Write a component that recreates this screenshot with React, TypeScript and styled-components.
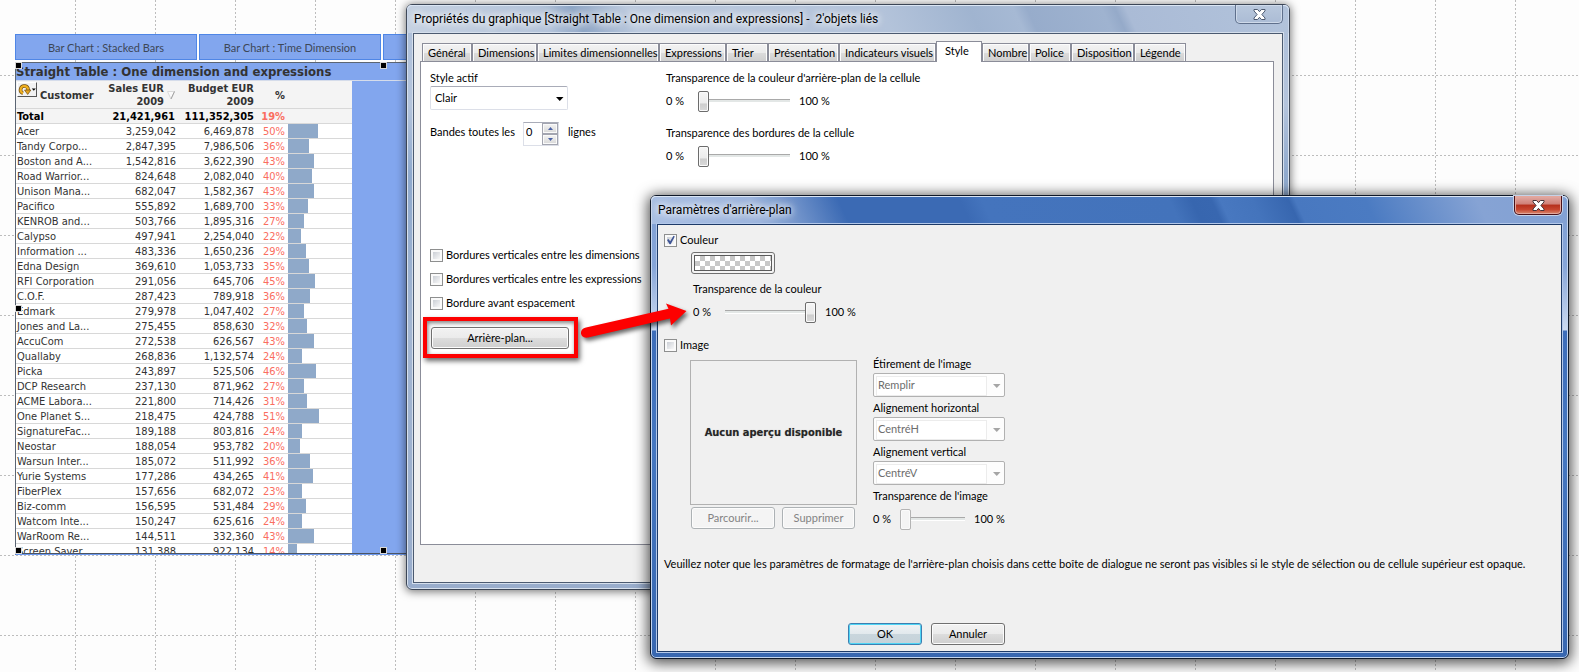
import React, { useState } from 'react';
import styled, { createGlobalStyle, css } from 'styled-components';

const tableFont = '"DejaVu Sans Condensed", "DejaVu Sans", Tahoma, sans-serif';
const dialogFont = 'Lato, Tahoma, sans-serif';
const titleFont = 'Roboto, "Segoe UI", sans-serif';

const Global = createGlobalStyle`
  *, *::before, *::after { box-sizing: border-box; }
  body { margin: 0; background: #fdfdfd; }
  button, input, select { font: inherit; color: inherit; margin: 0; }
`;

/* ---------- Sheet ---------- */

const Desktop = styled.main`
  position: relative;
  min-height: 100vh;
  overflow: hidden;
  padding: 34px 0 0 15px;
  background-color: #fdfdfd;
  background-image:
    conic-gradient(from 90deg at 1px 2px, transparent 50%, #bdbdbd 0 75%, transparent 0),
    conic-gradient(from 90deg at 2px 1px, transparent 50%, #bdbdbd 0 75%, transparent 0);
  background-size: 80px 4px, 4px 80px;
  background-position: 75px 0, 0 75px;
`;

const SheetTabs = styled.nav`
  display: flex;
  gap: 2px;
  width: 737px;
  padding-bottom: 2px;
`;

const SheetTab = styled.button`
  flex: 0 0 182px;
  height: 26px;
  padding: 0;
  border: 1px solid #4f86e6;
  background: #82a6ee;
  color: #3d4757;
  font: 11px ${dialogFont};
`;

const ChartObject = styled.section`
  position: relative;
  width: 737px;
  height: 493px;
  border-top: 1px solid #5b6573;
  border-left: 1px solid #5b6573;
  border-bottom: 1px solid #6d9af0;
  background: #82a6ee;
`;

const ChartClip = styled.div`
  height: 491px;
  overflow: hidden;
  border-bottom: 1px solid #4c5563;
`;

const Caption = styled.h2`
  margin: 0;
  height: 18px;
  border-bottom: 1px solid #d5dcea;
  color: #333;
  font: bold 13px/17px ${tableFont};
  white-space: nowrap;
`;

const Handle = styled.i<{ $x: string; $y: string }>`
  position: absolute;
  left: ${(p) => p.$x};
  top: ${(p) => p.$y};
  width: 7px;
  height: 7px;
  background: #000;
  border: 1px solid #d8d8d8;
`;

const StraightTable = styled.table`
  table-layout: fixed;
  width: 336px;
  border-collapse: separate;
  border-spacing: 0;
  background: #fff;
  color: #333;
  font: 11px/13px ${tableFont};
  white-space: nowrap;

  th, td {
    height: 15px;
    padding: 1px 3px 0 0;
    border-bottom: 1px solid #d8d8d8;
    text-align: right;
    overflow: hidden;
  }
  th:first-child, td:first-child { text-align: left; padding: 1px 0 0 1px; }
  td:last-child, th:last-child { padding: 0; }
  thead th { height: 28px; background: #f4f4f4; }
`;

const TotalRow = styled.tr`
  background: #f4f4f4;
  color: #000;
  font-weight: bold;
`;

const DataRow = styled.tr`
  td:nth-child(2) { padding-right: 2px; }
`;

const Percent = styled.td`
  color: #fa6e5f;
`;

const Bar = styled.div`
  height: 14px;
  background: #8fa9c9;
`;

const HeaderCell = styled.div<{ $end?: boolean }>`
  display: flex;
  align-items: center;
  justify-content: ${(p) => (p.$end ? 'flex-end' : 'flex-start')};
  gap: 3px;
  height: 26px;
`;

const CycleButton = styled.button`
  align-self: flex-start;
  width: 20px;
  height: 15px;
  padding: 0;
  border: 1px solid;
  border-color: #fff #555 #555 #fff;
  background: #f2f2f2;
  line-height: 0;
`;

/* ---------- Windows ---------- */

const Window = styled.section<{ $active?: boolean }>`
  position: absolute;
  border: 1px solid ${(p) => (p.$active ? '#0f1828' : '#3c4656')};
  border-radius: 6px;
  padding: 0 6px 6px;
  ${(p) =>
    p.$active
      ? css`
          background: linear-gradient(to bottom, #7f9fd3 0, #86a5d8 70px, #cbdaf1 134px, #3d6db9 135px, #4577c1 250px, #3867b0 100%);
          box-shadow: inset 0 0 0 1px #c3d5ef, 0 2px 14px 2px rgba(0, 0, 0, 0.7);
        `
      : css`
          background: linear-gradient(to bottom, #adbfd9 0, #b4c4dc 100px, #8fa9cd 170px, #a3b6d2 320px, #99adcc 100%);
          box-shadow: inset 0 0 0 1px #d7e1ee, 0 1px 8px 1px rgba(0, 0, 0, 0.5);
        `}
`;

const PropertiesWindow = styled(Window)`
  top: 4px;
  left: 406px;
  right: 289px;
`;

const BackgroundWindow = styled(Window)`
  top: 195px;
  left: 650px;
  right: 10px;
`;

const TitleBar = styled.header<{ $active?: boolean }>`
  display: flex;
  align-items: flex-start;
  justify-content: space-between;
  height: 28px;
  margin: 0 -6px;
  padding: 0 6px 0 7px;
  border-radius: 5px 5px 0 0;
  background: ${(p) =>
    p.$active
      ? 'linear-gradient(65deg, #a9bfe3 0, #9db5dd 100px, #3b6ab4 180px, #3b6ab4 290px, #4474bd 310px, #4373bb 480px, #3766af 500px, #3867b0 518px, #4878c0 526px, #4474bc 555px, #3766af 588px, #4878c0 594px, #4b7bc2 78%, #86a3d4 90%, #82a1d4 100%)'
      : 'linear-gradient(65deg, #c6d2e2 0, #b4c4da 130px, #8ea6c6 160px, #bccade 210px, #b3c3da 440px, #a0b4d0 520px, #a6b9d4 560px, #97accb 572px, #9fb3d0 640px, #95aac9 652px, #aabbd6 662px, #b2c3db 100%)'};
  box-shadow: inset 0 1px 0 #dbe6f4, inset 1px 0 0 #c9d6ea, inset -1px 0 0 #c9d6ea;
`;

const Title = styled.h1`
  margin: 0;
  font: 12px/28px ${titleFont};
  color: #000;
  white-space: pre;
  text-shadow: 0 0 6px #fff, 0 0 10px #fff, 0 0 12px rgba(255, 255, 255, 0.7);
`;

const CloseButton = styled.button<{ $active?: boolean }>`
  width: 48px;
  height: 19px;
  padding: 0;
  border: 1px solid ${(p) => (p.$active ? '#4a1018' : '#5f708c')};
  border-top: 0;
  border-radius: 0 0 5px 5px;
  line-height: 0;
  background: ${(p) =>
    p.$active
      ? 'linear-gradient(to bottom, #e3aca6 0, #cf8077 45%, #b52f1c 50%, #c6452f 75%, #d98b70 100%)'
      : 'linear-gradient(to bottom, #b9c8dd, #abbcd5)'};
  box-shadow: ${(p) => (p.$active ? '0 0 0 1px #c5d2e8, inset 0 0 0 1px #e3a79c' : 'inset 0 0 0 1px #cfdaea')};
`;

const Client = styled.div<{ $active?: boolean }>`
  border: 1px solid ${(p) => (p.$active ? '#1d3a68' : '#4b5a70')};
  box-shadow: 0 0 0 1px ${(p) => (p.$active ? '#b3c8ea' : '#d5dfec')};
  background: #f0f0f0;
  color: #000;
  font: 11px/16px ${dialogFont};
`;

const PropertiesClient = styled(Client)`
  padding: 7px 8px 37px 6px;
`;

const BackgroundClient = styled(Client)`
  padding: 7px 6px 6px;
`;

/* ---------- Tabs ---------- */

const TabStrip = styled.div`
  display: flex;
  align-items: flex-end;
  height: 20px;
  padding-left: 2px;
`;

const Tab = styled.button<{ $w: number }>`
  flex: 0 0 ${(p) => p.$w}px;
  height: 18px;
  padding: 0 0 0 5px;
  border: 1px solid #8b8d99;
  border-bottom: 0;
  background: linear-gradient(to bottom, #f3f3f3 0, #ebebeb 50%, #dcdcdc 51%, #cfcfcf 100%);
  box-shadow: inset 1px 1px 0 #fcfcfc, inset -1px 0 0 #fcfcfc;
  text-align: left;
  line-height: 17px;
  white-space: nowrap;

  &[aria-selected='true'] {
    height: 21px;
    margin-bottom: -1px;
    padding: 0 0 3px 8px;
    background: #fff;
    box-shadow: none;
    z-index: 1;
  }
`;

const Pane = styled.div`
  display: grid;
  grid-template-columns: 236px 1fr;
  min-height: 484px;
  padding: 8px 9px;
  border: 1px solid #8b8d99;
  background: #fff;
`;

/* ---------- Controls ---------- */

const Column = styled.div`
  display: flex;
  flex-direction: column;
  align-items: flex-start;
`;

const SelectBox = styled.span<{ $w: number }>`
  position: relative;
  display: block;
  width: ${(p) => p.$w}px;

  svg {
    position: absolute;
    right: 4px;
    top: 11px;
    pointer-events: none;
  }
`;

const Select = styled.select`
  display: block;
  appearance: none;
  width: 100%;
  height: 24px;
  padding: 0 20px 0 4px;
  border: 1px solid #dcdfe8;
  border-top-color: #a9acb8;
  border-radius: 2px;
  background: #fff;

  &:disabled {
    opacity: 1;
    border-color: #b1b1b1;
    color: #6d6d6d;
    background:
      linear-gradient(#fff, #fff) 3px 3px / 109px 18px no-repeat,
      linear-gradient(#ececec, #ececec) 2px 2px / 111px 20px no-repeat,
      #fdfdfd;
  }
`;

const BandRow = styled.div`
  display: flex;
  align-items: center;
  height: 24px;
  margin-top: 12px;
  white-space: nowrap;

  label { width: 93px; padding-bottom: 4px; }
  span { padding: 0 0 4px 9px; }
`;

const Spinner = styled.div`
  display: grid;
  grid-template-columns: 1fr 16px;
  grid-template-rows: 11px 11px;
  width: 36px;
  height: 24px;
  border: 1px solid #dcdfe8;
  border-top-color: #a9acb8;

  input {
    grid-row: 1 / 3;
    width: 100%;
    padding: 0 0 4px 2px;
    border: 0;
    background: #fff;
    outline: 0;
  }
`;

const SpinButton = styled.button`
  display: flex;
  align-items: center;
  justify-content: center;
  padding: 0;
  border: 1px solid #a3a5b0;
  background: linear-gradient(#f3f3f3, #d8d8d8);
  box-shadow: inset 0 0 0 1px #fafafa;
  line-height: 0;
`;

const SliderGroup = styled.div`
  display: flex;
  flex-direction: column;
  gap: 4px;
  margin-bottom: 13px;
`;

const SliderRow = styled.div<{ $lead?: number }>`
  display: flex;
  align-items: center;
  height: 22px;

  span:first-child { width: ${(p) => p.$lead ?? 32}px; }
  span:last-child { padding-left: 9px; }
`;

const SliderSpace = styled.div`
  padding-top: 4px;
`;

const Range = styled.input<{ $w: number }>`
  appearance: none;
  display: block;
  width: ${(p) => p.$w}px;
  height: 22px;
  background: transparent;

  &::-webkit-slider-runnable-track {
    height: 4px;
    border-top: 1px solid #a9a9a9;
    border-bottom: 1px solid #fff;
    background: #e3e7e6;
  }
  &::-webkit-slider-thumb {
    appearance: none;
    width: 11px;
    height: 21px;
    margin-top: -9px;
    border: 1px solid #6c6c6c;
    border-radius: 2px;
    background: linear-gradient(to bottom, #f6f6f6 0, #ebebeb 60%, #cdcdcd 61%, #d9d9d9 100%);
    box-shadow: inset 0 0 0 1px #fafafa;
  }
  &:disabled::-webkit-slider-thumb {
    border-color: #b4b4b4;
    background: #f4f4f4;
  }
`;

const CheckLabel = styled.label`
  display: flex;
  align-items: center;
  gap: 3px;
  height: 16px;
  white-space: nowrap;
`;

const CheckInput = styled.input`
  appearance: none;
  width: 13px;
  height: 13px;
  padding: 2px;
  border: 1px solid #8e8f8f;
  background: linear-gradient(135deg, #cbcfd5, #f8f8f8) content-box, #fafafa;
`;

const CheckBox = styled.span`
  position: relative;
  display: block;
  width: 13px;
  height: 13px;
  line-height: 0;

  svg { position: absolute; left: 2px; top: 1px; pointer-events: none; }
`;

const CheckList = styled.div`
  display: flex;
  flex-direction: column;
  gap: 8px;
  margin-top: 101px;
`;

const Button = styled.button<{ $w: number; $primary?: boolean }>`
  width: ${(p) => p.$w}px;
  height: 22px;
  padding: 0;
  border: 1px solid ${(p) => (p.$primary ? '#3c7fb1' : '#707070')};
  border-radius: 3px;
  background: ${(p) =>
    p.$primary
      ? 'linear-gradient(to bottom, #f0f3f5 0, #e2e9ed 49%, #c9d6dd 50%, #c5d2d9 100%)'
      : 'linear-gradient(to bottom, #f2f2f2 0, #ebebeb 49%, #dddddd 50%, #cfcfcf 100%)'};
  box-shadow: inset 0 0 0 1px ${(p) => (p.$primary ? '#4fd5f5' : '#fcfcfc')};

  &:disabled {
    border-color: #adb2b5;
    background: #f4f4f4;
    color: #838383;
  }
`;

/* Red frame that calls out the button it surrounds. */
const Highlight = styled.div`
  margin: 6px 0 0 -7px;
  padding: 6px 5px 5px 4px;
  border: 4px solid #fd0000;
  box-shadow: 2px 3px 5px rgba(0, 0, 0, 0.6), inset 1px 2px 4px rgba(0, 0, 0, 0.5);
`;

const Arrow = styled.svg`
  position: absolute;
  left: 576px;
  top: 296px;
  pointer-events: none;
  filter: drop-shadow(2px 3px 2px rgba(0, 0, 0, 0.6));
`;

const ColorArea = styled.div`
  padding: 4px 0 0 27px;
  margin-bottom: 14px;
`;

const ColorSlider = styled.div`
  padding: 7px 0 0 2px;
`;

const Swatch = styled.button`
  display: block;
  width: 84px;
  height: 22px;
  padding: 2px;
  border: 1px solid #707070;
  border-radius: 3px;
  background: #f4f4f4;

  span {
    display: block;
    height: 100%;
    border: 1px solid #5c5c5c;
    background: repeating-conic-gradient(#c8c8c8 0 25%, #fff 0 50%) 0 0 / 10px 10px;
  }
`;

const ImageArea = styled.div`
  display: grid;
  grid-template-columns: 183px 1fr;
  padding: 3px 0 0 26px;
`;

const Preview = styled.div`
  display: flex;
  align-items: center;
  justify-content: center;
  width: 167px;
  height: 145px;
  margin: 4px 0 2px;
  border: 1px solid #b1b1b1;
  color: #262626;
  font: bold 11px ${tableFont};
  text-shadow: 0 0 1px #aaa;
`;

const ButtonRow = styled.div`
  display: flex;
  gap: 7px;
  padding-left: 1px;
`;

const Field = styled.label`
  display: grid;
  gap: 1px;
  margin-bottom: 3px;
`;

const Note = styled.p`
  margin: 26px 0 51px;
`;

const DialogButtons = styled.div`
  display: flex;
  gap: 9px;
  padding-left: 184px;
`;

/* ---------- Data ---------- */

const rows: [string, string, string, number, number][] = [
  ['Acer', '3,259,042', '6,469,878', 50, 30],
  ['Tandy Corpo...', '2,847,395', '7,986,506', 36, 21],
  ['Boston and A...', '1,542,816', '3,622,390', 43, 26],
  ['Road Warrior...', '824,648', '2,082,040', 40, 24],
  ['Unison Mana...', '682,047', '1,582,367', 43, 26],
  ['Pacifico', '555,892', '1,689,700', 33, 20],
  ['KENROB and...', '503,766', '1,895,316', 27, 16],
  ['Calypso', '497,941', '2,254,040', 22, 13],
  ['Information ...', '483,336', '1,650,236', 29, 18],
  ['Edna Design', '369,610', '1,053,733', 35, 21],
  ['RFI Corporation', '291,056', '645,706', 45, 27],
  ['C.O.F.', '287,423', '789,918', 36, 22],
  ['Edmark', '279,978', '1,047,402', 27, 16],
  ['Jones and La...', '275,455', '858,630', 32, 19],
  ['AccuCom', '272,538', '626,567', 43, 26],
  ['Quallaby', '268,836', '1,132,574', 24, 14],
  ['Picka', '243,897', '525,506', 46, 28],
  ['DCP Research', '237,130', '871,962', 27, 16],
  ['ACME Labora...', '221,800', '714,426', 31, 19],
  ['One Planet S...', '218,475', '424,788', 51, 31],
  ['SignatureFac...', '189,188', '803,816', 24, 14],
  ['Neostar', '188,054', '953,782', 20, 12],
  ['Warsun Inter...', '185,072', '511,992', 36, 22],
  ['Yurie Systems', '177,286', '434,265', 41, 25],
  ['FiberPlex', '157,656', '682,072', 23, 14],
  ['Biz-comm', '156,595', '531,484', 29, 18],
  ['Watcom Inte...', '150,247', '625,616', 24, 14],
  ['WarRoom Re...', '144,511', '332,360', 43, 26],
  ['Screen Saver', '131,388', '922,134', 14, 9],
];

const columnWidths = [81, 81, 79, 31, 64];

const tabs: [string, number][] = [
  ['Général', 50],
  ['Dimensions', 65],
  ['Limites dimensionnelles', 122],
  ['Expressions', 67],
  ['Trier', 42],
  ['Présentation', 71],
  ['Indicateurs visuels', 97],
  ['Style', 46],
  ['Nombre', 47],
  ['Police', 42],
  ['Disposition', 63],
  ['Légende', 52],
];

/* ---------- Small parts ---------- */

const CloseGlyph = ({ stroke }: { stroke: string }) => (
  <svg width="13" height="11" viewBox="0 0 13 11">
    <path
      d="M1 .5h3.6l1.9 2.2L8.400.5H12v1.400L8.900 5.500 12 9v1.500H8.400L6.500 8.300 4.600 10.500H1V9l3.100-3.500L1 1.900z"
      fill="#fff"
      stroke={stroke}
    />
  </svg>
);

const DropArrow = ({ color }: { color: string }) => (
  <svg width="8" height="4" viewBox="0 0 8 4">
    <path d="M0 0h7.500L3.750 4z" fill={color} />
  </svg>
);

function Check({ label, checked = false }: { label: string; checked?: boolean }) {
  const [on, setOn] = useState(checked);
  return (
    <CheckLabel>
      <CheckBox>
        <CheckInput type="checkbox" checked={on} onChange={() => setOn(!on)} />
        {on && (
          <svg width="10" height="10" viewBox="0 0 10 10">
            <path d="M1 5l1.500-1 1.700 2.200L7.500.8l1.300.6L4.700 9.300H3.600z" fill="#3f5595" />
          </svg>
        )}
      </CheckBox>
      {label}
    </CheckLabel>
  );
}

function Slider(props: { label: string; value: number; width: number; lead?: number; disabled?: boolean }) {
  return (
    <SliderRow $lead={props.lead}>
      <span>0 %</span>
      <Range
        type="range"
        aria-label={props.label}
        defaultValue={props.value}
        disabled={props.disabled}
        $w={props.width}
      />
      <span>100 %</span>
    </SliderRow>
  );
}

function DisabledField({ label, value }: { label: string; value: string }) {
  return (
    <Field>
      {label}
      <SelectBox $w={132}>
        <Select disabled defaultValue={value}>
          <option>{value}</option>
        </Select>
        <DropArrow color="#a5a5a5" />
      </SelectBox>
    </Field>
  );
}

function Chart() {
  return (
    <ChartObject>
      <ChartClip>
        <Caption>Straight Table : One dimension and expressions</Caption>
        <StraightTable>
          <colgroup>
            {columnWidths.map((width, i) => (
              <col key={i} width={width} />
            ))}
          </colgroup>
          <thead>
            <tr>
              <th scope="col">
                <HeaderCell>
                  <CycleButton aria-label="Cycle">
                    <svg width="18" height="13" viewBox="0 0 18 13">
                      <path d="M5 10.200A3.700 3.700 0 1 1 10 7" fill="none" stroke="#6e4c12" strokeWidth="3.600" />
                      <path d="M5 10.200A3.700 3.700 0 1 1 10 7" fill="none" stroke="#f0b020" strokeWidth="2.200" />
                      <path d="M6.500 7h6.400L9.700 11.500z" fill="#e8a51c" stroke="#6e4c12" strokeWidth=".7" />
                      <path d="M13.800 5.500h4L15.800 7.700z" fill="#000" />
                    </svg>
                  </CycleButton>
                  Customer
                </HeaderCell>
              </th>
              <th scope="col">
                <HeaderCell $end>
                  <span>
                    Sales EUR
                    <br />
                    2009
                  </span>
                  <svg width="8" height="9" viewBox="0 0 8 9">
                    <path d="M.5.5h7L4 8z" fill="#fafafa" stroke="#dadada" />
                    <path d="M7.500.5L4 8" stroke="#a0a0a0" />
                  </svg>
                </HeaderCell>
              </th>
              <th scope="col">
                Budget EUR
                <br />
                2009
              </th>
              <th scope="col">%</th>
              <th />
            </tr>
          </thead>
          <tbody>
            <TotalRow>
              <td>Total</td>
              <td>21,421,961</td>
              <td>111,352,305</td>
              <Percent>19%</Percent>
              <td />
            </TotalRow>
            {rows.map(([name, sales, budget, pct, bar]) => (
              <DataRow key={name}>
                <td>{name}</td>
                <td>{sales}</td>
                <td>{budget}</td>
                <Percent>{pct}%</Percent>
                <td>
                  <Bar style={{ width: bar }} />
                </td>
              </DataRow>
            ))}
          </tbody>
        </StraightTable>
      </ChartClip>
      <Handle $x="-1px" $y="-1px" />
      <Handle $x="calc(50% - 4px)" $y="-1px" />
      <Handle $x="-1px" $y="calc(50% - 4px)" />
      <Handle $x="-1px" $y="calc(100% - 7px)" />
      <Handle $x="calc(50% - 4px)" $y="calc(100% - 7px)" />
    </ChartObject>
  );
}

function PropertiesDialog() {
  const [selected, setSelected] = useState('Style');
  const [bands, setBands] = useState(0);
  return (
    <PropertiesWindow>
      <TitleBar>
        <Title>{"Propriétés du graphique [Straight Table : One dimension and expressions] -  2'objets liés"}</Title>
        <CloseButton aria-label="Fermer">
          <CloseGlyph stroke="#4d5a70" />
        </CloseButton>
      </TitleBar>
      <PropertiesClient>
        <TabStrip role="tablist">
          {tabs.map(([name, width]) => (
            <Tab
              key={name}
              role="tab"
              $w={width}
              aria-selected={name === selected}
              onClick={() => setSelected(name)}
            >
              {name}
            </Tab>
          ))}
        </TabStrip>
        <Pane>
          <Column>
            <label htmlFor="style">Style actif</label>
            <SelectBox $w={138}>
              <Select id="style" defaultValue="Clair">
                <option>Clair</option>
              </Select>
              <DropArrow color="#000" />
            </SelectBox>
            <BandRow>
              <label htmlFor="bands">Bandes toutes les</label>
              <Spinner>
                <input id="bands" value={bands} onChange={(e) => setBands(Number(e.target.value) || 0)} />
                <SpinButton aria-label="Plus" onClick={() => setBands(bands + 1)}>
                  <svg width="5" height="3" viewBox="0 0 5 3">
                    <path d="M0 3h5L2.500 0z" fill="#4a62a6" />
                  </svg>
                </SpinButton>
                <SpinButton aria-label="Moins" onClick={() => setBands(Math.max(0, bands - 1))}>
                  <svg width="5" height="3" viewBox="0 0 5 3">
                    <path d="M0 0h5L2.500 3z" fill="#4a62a6" />
                  </svg>
                </SpinButton>
              </Spinner>
              <span>lignes</span>
            </BandRow>
            <CheckList>
              <Check label="Bordures verticales entre les dimensions" />
              <Check label="Bordures verticales entre les expressions" />
              <Check label="Bordure avant espacement" />
            </CheckList>
            <Highlight>
              <Button $w={138}>Arrière-plan...</Button>
            </Highlight>
          </Column>
          <Column>
            <SliderGroup>
              Transparence de la couleur d'arrière-plan de la cellule
              <Slider label="Transparence de la couleur d'arrière-plan" value={0} width={92} />
            </SliderGroup>
            <SliderGroup>
              Transparence des bordures de la cellule
              <Slider label="Transparence des bordures" value={0} width={92} />
            </SliderGroup>
          </Column>
        </Pane>
      </PropertiesClient>
    </PropertiesWindow>
  );
}

function BackgroundDialog() {
  return (
    <BackgroundWindow $active>
      <TitleBar $active>
        <Title>Paramètres d'arrière-plan</Title>
        <CloseButton $active aria-label="Fermer">
          <CloseGlyph stroke="#46343a" />
        </CloseButton>
      </TitleBar>
      <BackgroundClient $active>
        <Check label="Couleur" checked />
        <ColorArea>
          <Swatch aria-label="Choisir la couleur">
            <span />
          </Swatch>
          <ColorSlider>
            Transparence de la couleur
            <SliderSpace>
              <Slider label="Transparence de la couleur" value={100} width={91} />
            </SliderSpace>
          </ColorSlider>
        </ColorArea>
        <Check label="Image" />
        <ImageArea>
          <div>
            <Preview>Aucun aperçu disponible</Preview>
            <ButtonRow>
              <Button $w={84} disabled>
                Parcourir...
              </Button>
              <Button $w={73} disabled>
                Supprimer
              </Button>
            </ButtonRow>
          </div>
          <Column>
            <DisabledField label="Étirement de l'image" value="Remplir" />
            <DisabledField label="Alignement horizontal" value="CentréH" />
            <DisabledField label="Alignement vertical" value="CentréV" />
            Transparence de l'image
            <SliderSpace>
              <Slider label="Transparence de l'image" value={0} width={65} lead={27} disabled />
            </SliderSpace>
          </Column>
        </ImageArea>
        <Note>
          Veuillez noter que les paramètres de formatage de l'arrière-plan choisis dans cette boîte de dialogue ne
          seront pas visibles si le style de sélection ou de cellule supérieur est opaque.
        </Note>
        <DialogButtons>
          <Button $w={74} $primary>
            OK
          </Button>
          <Button $w={74}>Annuler</Button>
        </DialogButtons>
      </BackgroundClient>
    </BackgroundWindow>
  );
}

export default function App() {
  return (
    <>
      <Global />
      <Desktop>
        <SheetTabs>
          <SheetTab>Bar Chart : Stacked Bars</SheetTab>
          <SheetTab>Bar Chart : Time Dimension</SheetTab>
          <SheetTab aria-label="Bar Chart" />
        </SheetTabs>
        <Chart />
        <PropertiesDialog />
        <BackgroundDialog />
        <Arrow width="124" height="50" viewBox="0 0 124 50" aria-hidden="true">
          <path
            d="M10 31.500L92.500 12.800 90 7.500 110.500 15 95 29.500 94 22.500 12 41.500C3.500 43 2.500 32.500 10 31.500z"
            fill="#fd0000"
          />
        </Arrow>
      </Desktop>
    </>
  );
}
